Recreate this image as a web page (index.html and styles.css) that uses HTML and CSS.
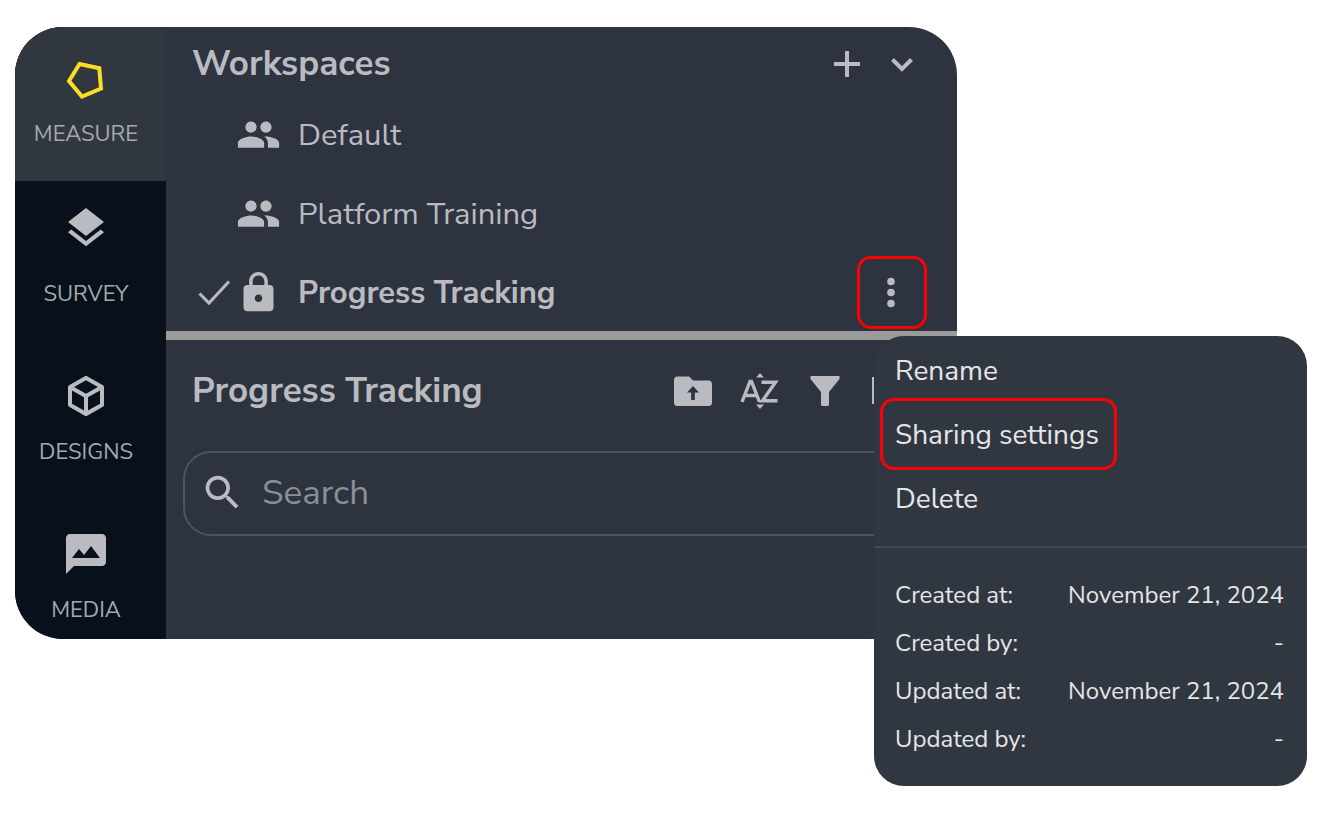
FILE: index.html
```html
<!DOCTYPE html>
<html lang="en">
<head>
  <meta charset="UTF-8">
  <meta name="viewport" content="width=device-width, initial-scale=1.0">
  <title>Workspaces</title>
  <link rel="stylesheet" href="styles.css">
</head>
<body>

  <div class="app">

    <nav class="rail">
      <a class="rail-item active" href="#measure">
        <svg class="rail-icon" viewBox="0 0 48 48"><path d="M17.500 8l19.800 4.200 1.700 20.300L20 40.500 7 25z" fill="none" stroke="#fade25" stroke-width="4"/></svg>
        MEASURE
      </a>
      <a class="rail-item survey" href="#survey">
        <svg class="rail-icon" viewBox="0 0 24 24"><path d="M11.990 18.540l-7.370-5.730L3 14.070l9 7 9-7-1.630-1.270zM12 16l7.360-5.730L21 9l-9-7-9 7 1.630 1.270z"/></svg>
        SURVEY
      </a>
      <a class="rail-item" href="#designs">
        <svg class="rail-icon" viewBox="0 0 24 24"><path d="M21 16.500c0 .38-.21.71-.53.880l-7.900 4.440c-.16.120-.36.180-.57.180s-.41-.06-.57-.18l-7.900-4.440A.99.99 0 0 1 3 16.500v-9c0-.38.210-.71.530-.88l7.900-4.440c.16-.12.360-.18.570-.18s.410.060.570.180l7.900 4.440c.32.170.530.500.530.880v9M12 4.150L6.040 7.500 12 10.850l5.960-3.350L12 4.150M5 15.910l6 3.380v-6.710L5 9.210v6.700m14 0v-6.700l-6 3.370v6.710l6-3.380z"/></svg>
        DESIGNS
      </a>
      <a class="rail-item" href="#media">
        <svg class="rail-icon" viewBox="0 0 24 24"><path fill-rule="evenodd" d="M20 2H4c-1.100 0-2 .900-2 2v18l4-4h14c1.100 0 2-.900 2-2V4c0-1.100-.900-2-2-2zM5 14l3.500-4.500 2.500 3.010L14.500 8l4.500 6z"/></svg>
        MEDIA
      </a>
    </nav>

    <main class="panel">

      <!-- Workspace list -->
      <section class="workspaces">
        <header class="workspaces-header">
          <h2 class="title">Workspaces</h2>
          <button class="icon-button" aria-label="Add workspace">
            <svg viewBox="0 0 48 48"><path d="M24 11v26M11 24h26" fill="none" stroke="#b9bbc0" stroke-width="4"/></svg>
          </button>
          <button class="icon-button" aria-label="Collapse">
            <svg viewBox="0 0 48 48"><path d="M14.500 19.500L24 29l9.500-9.500" fill="none" stroke="#b9bbc0" stroke-width="4"/></svg>
          </button>
        </header>

        <ul class="workspace-list">
          <li class="workspace">
            <span class="check"></span>
            <svg class="workspace-icon" viewBox="0 0 24 24"><path d="M16 11c1.660 0 2.990-1.340 2.990-3S17.660 5 16 5s-3 1.340-3 3 1.340 3 3 3zm-8 0c1.660 0 2.990-1.340 2.990-3S9.660 5 8 5 5 6.340 5 8s1.340 3 3 3zm0 2c-2.330 0-7 1.170-7 3.500V19h14v-2.500C15 14.170 10.330 13 8 13zm8 0c-.29 0-.62.020-.97.050 1.160.840 1.970 1.970 1.970 3.450V19h6v-2.500c0-2.330-4.670-3.500-7-3.500z"/></svg>
            <span class="workspace-name">Default</span>
          </li>
          <li class="workspace">
            <span class="check"></span>
            <svg class="workspace-icon" viewBox="0 0 24 24"><path d="M16 11c1.660 0 2.990-1.340 2.990-3S17.660 5 16 5s-3 1.340-3 3 1.340 3 3 3zm-8 0c1.660 0 2.990-1.340 2.990-3S9.660 5 8 5 5 6.340 5 8s1.340 3 3 3zm0 2c-2.330 0-7 1.170-7 3.500V19h14v-2.500C15 14.170 10.330 13 8 13zm8 0c-.29 0-.62.020-.97.050 1.160.840 1.970 1.970 1.970 3.450V19h6v-2.500c0-2.330-4.670-3.500-7-3.500z"/></svg>
            <span class="workspace-name">Platform Training</span>
          </li>
          <li class="workspace selected">
            <svg class="check" viewBox="0 0 44 44"><path d="M7.500 22.500l9.500 9.500L37 10.500" fill="none" stroke="#b9bbc0" stroke-width="3"/></svg>
            <svg class="workspace-icon" viewBox="0 0 24 24"><path d="M18 8h-1V6c0-2.760-2.240-5-5-5S7 3.240 7 6v2H6c-1.100 0-2 .900-2 2v10c0 1.100.900 2 2 2h12c1.100 0 2-.900 2-2V10c0-1.100-.900-2-2-2zm-6 9c-1.100 0-2-.900-2-2s.900-2 2-2 2 .900 2 2-.900 2-2 2zm3.100-9H8.900V6c0-1.710 1.390-3.100 3.100-3.100s3.100 1.390 3.100 3.100z"/></svg>
            <span class="workspace-name">Progress Tracking</span>
            <button class="more-button" aria-label="More">
              <svg viewBox="0 0 48 48"><circle cx="23" cy="12.500" r="3.800"/><circle cx="23" cy="23.500" r="3.800"/><circle cx="23" cy="34.500" r="3.800"/></svg>
            </button>
          </li>
        </ul>
      </section>

      <!-- Content of the selected workspace -->
      <section class="content">
        <header class="content-header">
          <h2 class="title">Progress Tracking</h2>
          <div class="tools">
            <button class="icon-button" aria-label="Upload">
              <svg viewBox="0 0 48 48"><path fill-rule="evenodd" d="M8.500 9.500H20l4 4h15.500a3.500 3.500 0 0 1 3.500 3.500v18.500a3.500 3.500 0 0 1-3.500 3.500h-31A3.500 3.500 0 0 1 5 35.500V13a3.500 3.500 0 0 1 3.500-3.500zM22.200 33h3.600v-7.500h4.200l-6-6.500-6 6.500h4.200z"/></svg>
            </button>
            <button class="icon-button" aria-label="Sort">
              <svg viewBox="0 0 48 48"><path d="M25 6l4 4.500h-8zM25 42l4-4.500h-8z"/><path d="M7 35l8-20.500h1.500L24.500 35M10 28.500h12M26.500 15.200h14L27.500 33.700h15" fill="none" stroke="#b9bbc0" stroke-width="3.400"/></svg>
            </button>
            <button class="icon-button" aria-label="Filter">
              <svg viewBox="0 0 48 48"><path d="M9.500 9h29v3L28 25v12.500a1.500 1.500 0 0 1-1.500 1.500h-5a1.500 1.500 0 0 1-1.500-1.500V25L9.500 12z"/></svg>
            </button>
            <button class="icon-button" aria-label="Layout">
              <svg viewBox="0 0 48 48"><rect x="6.500" y="11.500" width="35" height="24" fill="none" stroke="#b9bbc0" stroke-width="3"/></svg>
            </button>
          </div>
        </header>
        <label class="search">
          <svg class="search-icon" viewBox="0 0 24 24"><path d="M15.500 14h-.79l-.28-.27A6.471 6.471 0 0 0 16 9.500 6.500 6.500 0 1 0 9.500 16c1.610 0 3.090-.59 4.230-1.570l.27.280v.79l5 4.990L20.490 19l-4.990-5zm-6 0C7.010 14 5 11.990 5 9.500S7.010 5 9.500 5 14 7.010 14 9.500 11.990 14 9.500 14z"/></svg>
          <input type="text" placeholder="Search" aria-label="Search">
        </label>
      </section>

    </main>
  </div>

  <!-- Context menu of the selected workspace -->
  <div class="menu">
    <div class="menu-actions">
      <button class="menu-item">Rename</button>
      <button class="menu-item marked">Sharing settings</button>
      <button class="menu-item">Delete</button>
    </div>
    <dl class="details">
      <dt>Created at:</dt><dd>November 21, 2024</dd>
      <dt>Created by:</dt><dd>-</dd>
      <dt>Updated at:</dt><dd>November 21, 2024</dd>
      <dt>Updated by:</dt><dd>-</dd>
    </dl>
  </div>

</body>
</html>
```

FILE: styles.css
```css
* {
  box-sizing: border-box;
}

body {
  margin: 0;
  min-height: 100vh;
  padding: 27px 0 40px 15px;
  background: #fff;
  color: #b9bbc0;
  font-family: "Nunito Sans", "Noto Sans", sans-serif;
  position: relative;
}

svg {
  display: block;
  fill: #b9bbc0;
  flex-shrink: 0;
}

button {
  font-family: inherit;
  color: inherit;
  background: none;
  border: none;
  padding: 0;
  cursor: pointer;
}

.app {
  display: flex;
  margin-right: 28vw;
  border-radius: 48px;
  overflow: hidden;
  background: #2d333f;
}

/* left navigation */
.rail {
  width: 151px;
  flex-shrink: 0;
  background: #08101b;
}

.rail-item {
  display: flex;
  flex-direction: column;
  align-items: center;
  gap: 18px;
  padding: 33px 9px 31px 0;
  color: #a5a8ad;
  font-size: 22px;
  line-height: 28px;
  text-decoration: none;
}

.rail-item:last-child {
  padding-bottom: 15px;
}

.rail-item.active {
  gap: 16px;
  padding-top: 29px;
  padding-bottom: 33px;
  background: #31373f;
}

.rail-item.survey {
  gap: 28px;
  padding-top: 23px;
}

.rail-icon {
  width: 48px;
  height: 48px;
}

.panel {
  flex: 1;
  min-width: 0;
}

.title {
  flex: 1;
  margin: 0;
  font-size: 35px;
  font-weight: 700;
  line-height: 40px;
  white-space: nowrap;
}

.icon-button,
.icon-button svg {
  width: 48px;
  height: 48px;
}

/* workspaces */
.workspaces {
  border-bottom: 9px solid #9b9b9b;
}

.workspaces-header {
  display: flex;
  align-items: center;
  gap: 7px;
  height: 67px;
  padding: 7px 31px 0 26px;
}

.workspace-list {
  list-style: none;
  margin: 0;
  padding: 0;
}

.workspace {
  display: flex;
  align-items: center;
  height: 79px;
  padding: 2px 30px 0 26px;
  font-size: 31px;
}

.workspace.selected {
  font-weight: 700;
}

.check {
  width: 44px;
  height: 44px;
}

.workspace-icon {
  width: 45px;
  height: 45px;
  margin-right: 17px;
}

.workspace-name {
  flex: 1;
  white-space: nowrap;
}

.more-button {
  display: flex;
  align-items: center;
  justify-content: center;
  width: 70px;
  height: 73px;
  border: 3px solid #fb0007;
  border-radius: 14px;
}

.more-button svg {
  width: 48px;
  height: 48px;
}

/* workspace content */
.content {
  padding-bottom: 103px;
}

.content-header {
  display: flex;
  align-items: center;
  height: 111px;
  padding: 0 42px 10px 26px;
}

.tools {
  display: flex;
  gap: 18px;
}

.search {
  display: flex;
  align-items: center;
  gap: 17px;
  height: 85px;
  margin: 0 17px;
  padding: 0 15px 2px;
  border: 2px solid #4e545f;
  border-radius: 28px;
}

.search-icon {
  width: 45px;
  height: 45px;
}

.search input {
  flex: 1;
  min-width: 0;
  padding: 0;
  border: none;
  outline: none;
  background: none;
  color: #b9bbc0;
  font-family: inherit;
  font-size: 35px;
}

.search input::placeholder {
  color: #8a8e95;
}

/* context menu */
.menu {
  position: absolute;
  top: 336px;
  right: 22px;
  width: 433px;
  border-radius: 30px;
  background: #303740;
  color: #e4e5e7;
}

.menu-actions {
  display: flex;
  flex-direction: column;
  align-items: flex-start;
  padding: 6px 6px 20px;
  border-bottom: 2px solid #444a54;
}

.menu-item {
  height: 56px;
  padding: 2px 15px 0;
  font-size: 28px;
}

.menu-item.marked {
  height: 72px;
  padding: 2px 15px 0 12px;
  border: 3px solid #fb0007;
  border-radius: 14px;
}

.details {
  display: grid;
  grid-template-columns: auto 1fr;
  margin: 0;
  padding: 23px;
  padding-left: 21px;
  font-size: 24px;
  line-height: 48px;
}

.details dd {
  margin: 0;
  text-align: right;
}
```
